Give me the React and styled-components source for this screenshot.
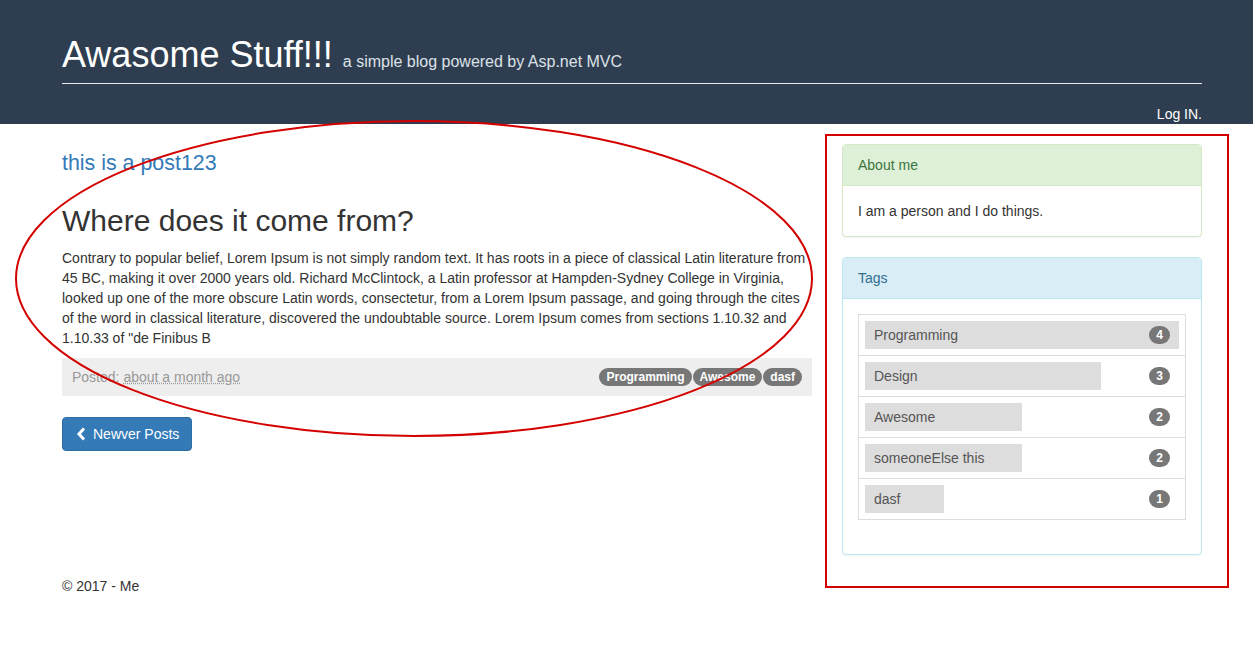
import React from 'react';
import styled, { createGlobalStyle } from 'styled-components';

const tags = [
  { name: 'Programming', count: 4 },
  { name: 'Design', count: 3 },
  { name: 'Awesome', count: 2 },
  { name: 'someoneElse this', count: 2 },
  { name: 'dasf', count: 1 },
];

const maxCount = 4;

const postText =
  'Contrary to popular belief, Lorem Ipsum is not simply random text. It has roots in a piece of classical Latin literature from 45 BC, making it over 2000 years old. Richard McClintock, a Latin professor at Hampden-Sydney College in Virginia, looked up one of the more obscure Latin words, consectetur, from a Lorem Ipsum passage, and going through the cites of the word in classical literature, discovered the undoubtable source. Lorem Ipsum comes from sections 1.10.32 and 1.10.33 of "de Finibus B';

const App = () => {
  return (
    <Page>
      <GlobalStyle />
      <Header>
        <HeaderInner>
          <SiteTitle>
            Awasome Stuff!!! <SiteTagline>a simple blog powered by Asp.net MVC</SiteTagline>
          </SiteTitle>
          <HeaderRule />
          <NavRow>
            <NavLink href='#'>Log IN.</NavLink>
          </NavRow>
        </HeaderInner>
      </Header>

      <Container>
        <Row>
          <MainColumn>
            <PostLink href='#'>this is a post123</PostLink>
            <PostHeading>Where does it come from?</PostHeading>
            <PostBody>{postText}</PostBody>
            <PostMeta>
              <Posted>
                Posted: <TimeAgo title='2017'>about a month ago</TimeAgo>
              </Posted>
              <LabelList>
                <Label>Programming</Label>
                <Label>Awesome</Label>
                <Label>dasf</Label>
              </LabelList>
            </PostMeta>
            <PagerButton>
              <svg width='11' height='14' viewBox='0 0 11 14'>
                <polyline points='8,1.5 3,7 8,12.5' fill='none' stroke='#fff' strokeWidth='3' strokeLinejoin='miter' />
              </svg>
              Newver Posts
            </PagerButton>
          </MainColumn>

          <Sidebar>
            <Panel $variant='success'>
              <PanelHeading $variant='success'>About me</PanelHeading>
              <PanelBody>I am a person and I do things.</PanelBody>
            </Panel>
            <Panel $variant='info'>
              <PanelHeading $variant='info'>Tags</PanelHeading>
              <PanelBody>
                <TagList>
                  {tags.map((tag) => (
                    <TagItem key={tag.name}>
                      <TagBar style={{ width: `${(tag.count / maxCount) * 100}%` }}>{tag.name}</TagBar>
                      <Badge>{tag.count}</Badge>
                    </TagItem>
                  ))}
                </TagList>
              </PanelBody>
            </Panel>
          </Sidebar>
        </Row>
        <Footer>© 2017 - Me</Footer>
      </Container>

      <Annotations width='1253' height='658' viewBox='0 0 1253 658'>
        <ellipse cx='414' cy='278.5' rx='398' ry='157.5' fill='none' stroke='#d40000' strokeWidth='2' />
        <rect x='826' y='135' width='402' height='452' fill='none' stroke='#d40000' strokeWidth='2' />
      </Annotations>
    </Page>
  );
};

export default App;

const GlobalStyle = createGlobalStyle`
  html, body {
    margin: 0;
    padding: 0;
    background: #fff;
  }
  body {
    font-family: "Liberation Sans", Arial, sans-serif;
    font-size: 14px;
    line-height: 20px;
    color: #333;
  }
  * {
    box-sizing: border-box;
  }
`;

const Page = styled.div`
  position: relative;
  width: 1253px;
  min-height: 658px;
  overflow: hidden;
`;

const Header = styled.header`
  background-color: #2e3e50;
`;

const HeaderInner = styled.div`
  padding: 35px 51px 0 62px;
`;

const SiteTitle = styled.h1`
  margin: 0;
  height: 40px;
  font-size: 36px;
  line-height: 40px;
  font-weight: 400;
  color: #fff;
`;

const SiteTagline = styled.span`
  font-size: 16px;
  line-height: 1;
  color: #dde2e8;
`;

const HeaderRule = styled.hr`
  margin: 8px 0 0 0;
  border: 0;
  border-top: 1px solid #e6e9ec;
`;

const NavRow = styled.nav`
  display: flex;
  justify-content: flex-end;
  margin-top: 20px;
`;

const NavLink = styled.a`
  color: #fff;
  text-decoration: none;
  font-size: 14px;
  line-height: 20px;
`;

const Container = styled.div`
  padding: 0 51px 0 62px;
`;

const Row = styled.div`
  display: flex;
  gap: 30px;
  align-items: flex-start;
`;

const MainColumn = styled.main`
  width: 750px;
  display: flex;
  flex-direction: column;
  align-items: flex-start;
`;

const PostLink = styled.a`
  display: block;
  margin-top: 28px;
  font-size: 21.4px;
  line-height: 23px;
  color: #337ab7;
  text-decoration: none;
`;

const PostHeading = styled.h2`
  margin: 29px 0 11px 0;
  font-size: 30px;
  line-height: 33px;
  font-weight: 400;
  color: #333;
`;

const PostBody = styled.p`
  margin: 0 0 10px 0;
`;

const PostMeta = styled.div`
  align-self: stretch;
  display: flex;
  justify-content: space-between;
  align-items: center;
  padding: 9px 10px;
  background: #eee;
`;

const Posted = styled.span`
  color: #999;
`;

const TimeAgo = styled.abbr`
  text-decoration: underline dotted;
  cursor: help;
`;

const LabelList = styled.div`
  display: flex;
  gap: 1px;
`;

const Label = styled.span`
  display: inline-block;
  padding: 3px 7px;
  font-size: 12px;
  font-weight: 700;
  line-height: 12px;
  color: #fff;
  background: #777;
  border-radius: 10px;
`;

const PagerButton = styled.button`
  display: inline-flex;
  align-items: center;
  gap: 6px;
  margin-top: 21px;
  padding: 6px 12px 6px 13px;
  height: 34px;
  font-family: inherit;
  font-size: 14px;
  line-height: 20px;
  color: #fff;
  background: #337ab7;
  border: 1px solid #2e6da4;
  border-radius: 4px;
`;

const Sidebar = styled.aside`
  width: 360px;
  padding-top: 20px;
`;

const panelColors = {
  success: { border: '#d6e9c6', bg: '#dff0d8', text: '#3c763d' },
  info: { border: '#bce8f1', bg: '#d9edf7', text: '#31708f' },
};

const Panel = styled.section`
  margin-bottom: 20px;
  background: #fff;
  border: 1px solid ${(p) => panelColors[p.$variant].border};
  border-radius: 4px;
  box-shadow: 0 1px 1px rgba(0, 0, 0, 0.05);
`;

const PanelHeading = styled.div`
  padding: 10px 15px;
  color: ${(p) => panelColors[p.$variant].text};
  background: ${(p) => panelColors[p.$variant].bg};
  border-bottom: 1px solid ${(p) => panelColors[p.$variant].border};
  border-radius: 3px 3px 0 0;
`;

const PanelBody = styled.div`
  padding: 15px;
`;

const TagList = styled.ul`
  margin: 0 0 20px 0;
  padding: 0;
  list-style: none;
`;

const TagItem = styled.li`
  position: relative;
  padding: 6px;
  margin-bottom: -1px;
  border: 1px solid #ddd;
`;

const TagBar = styled.div`
  height: 28px;
  padding: 0 9px;
  line-height: 28px;
  color: #555;
  background: #ddd;
  white-space: nowrap;
`;

const Badge = styled.span`
  position: absolute;
  right: 15px;
  top: 11px;
  min-width: 21px;
  padding: 3px 7px;
  font-size: 12px;
  font-weight: 700;
  line-height: 12px;
  color: #fff;
  text-align: center;
  background: #777;
  border-radius: 10px;
`;

const Footer = styled.footer`
  margin-top: 1px;
`;

const Annotations = styled.svg`
  position: absolute;
  top: 0;
  left: 0;
  pointer-events: none;
`;
